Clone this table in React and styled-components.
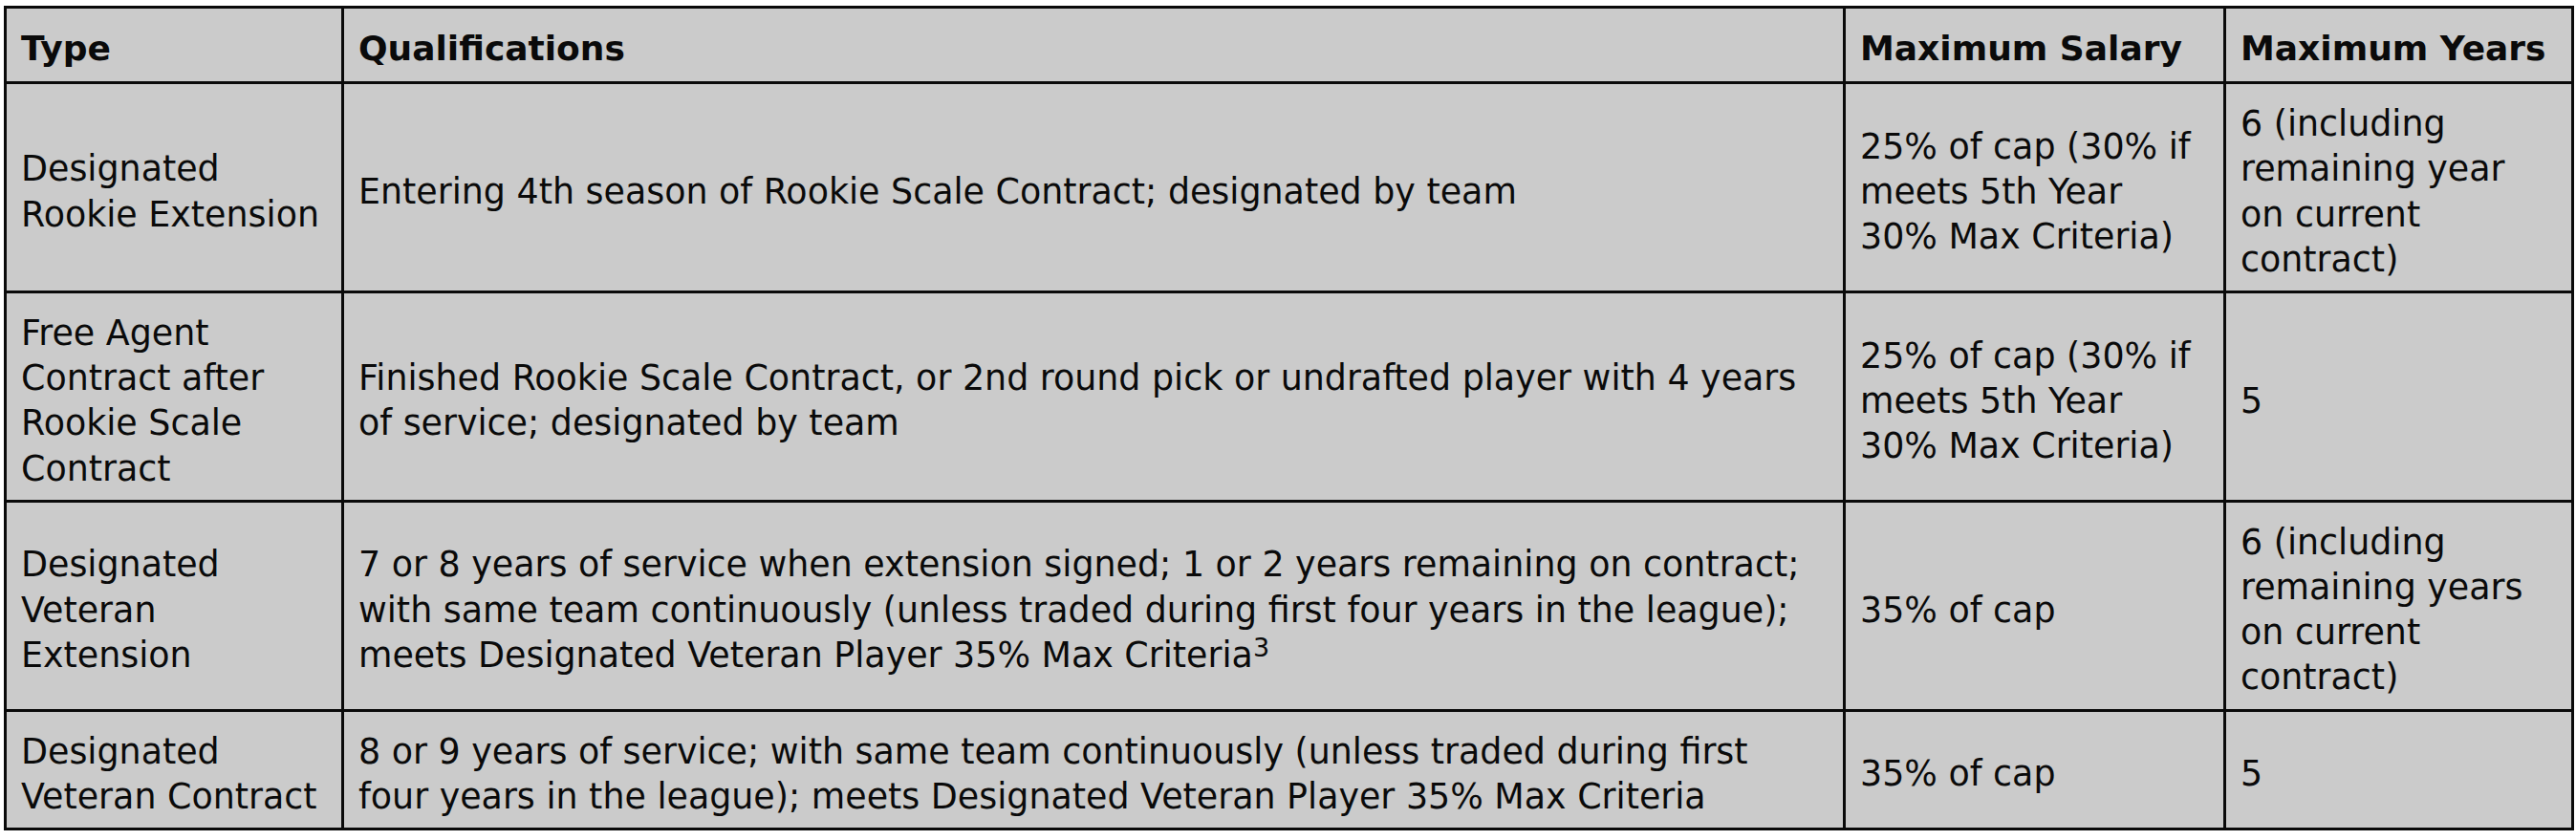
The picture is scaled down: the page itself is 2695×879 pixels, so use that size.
import React from "react";
import styled, { createGlobalStyle } from "styled-components";

const Global = createGlobalStyle`
  html, body { margin: 0; padding: 0; background: #ffffff; }
  body { font-family: "DejaVu Sans", Verdana, sans-serif; }
`;

const Page = styled.div`
  padding: 6px 0 0 4px;
`;

const Table = styled.table`
  width: 2686px;
  table-layout: fixed;
  border-collapse: collapse;
  border: 3px solid #0a0a0a;
  background: #cbcbcb;
  color: #0a0a0a;
  line-height: 47.2px;
`;

const Col = styled.col`
  width: ${(p) => p.$w}px;
`;

const Th = styled.th`
  border: 3px solid #0a0a0a;
  padding: 18px 15px 11px;
  text-align: left;
  vertical-align: middle;
  font-size: 36px;
  font-weight: bold;
`;

const Td = styled.td`
  border: 3px solid #0a0a0a;
  padding: 18px 15px 9px;
  text-align: left;
  vertical-align: middle;
  font-size: 36.4px;
  font-weight: normal;
`;

const Sup = styled.sup`
  font-size: 27px;
  line-height: 0;
  vertical-align: 11px;
`;

const cols = [353, 1571, 398, 364];

const rows = [
  {
    type: ["Designated", "Rookie Extension"],
    qual: ["Entering 4th season of Rookie Scale Contract; designated by team"],
    salary: ["25% of cap (30% if", "meets 5th Year", "30% Max Criteria)"],
    years: ["6 (including", "remaining year", "on current", "contract)"],
  },
  {
    type: ["Free Agent", "Contract after", "Rookie Scale", "Contract"],
    qual: [
      "Finished Rookie Scale Contract, or 2nd round pick or undrafted player with 4 years",
      "of service; designated by team",
    ],
    salary: ["25% of cap (30% if", "meets 5th Year", "30% Max Criteria)"],
    years: ["5"],
  },
  {
    type: ["Designated", "Veteran", "Extension"],
    qual: [
      "7 or 8 years of service when extension signed; 1 or 2 years remaining on contract;",
      "with same team continuously (unless traded during first four years in the league);",
      "meets Designated Veteran Player 35% Max Criteria",
    ],
    sup: "3",
    salary: ["35% of cap"],
    years: ["6 (including", "remaining years", "on current", "contract)"],
  },
  {
    type: ["Designated", "Veteran Contract"],
    qual: [
      "8 or 9 years of service; with same team continuously (unless traded during first",
      "four years in the league); meets Designated Veteran Player 35% Max Criteria",
    ],
    salary: ["35% of cap"],
    years: ["5"],
  },
];

function Lines({ lines, sup }) {
  return lines.map((l, i) => (
    <React.Fragment key={i}>
      {i > 0 && <br />}
      {l}
      {sup && i === lines.length - 1 && <Sup>{sup}</Sup>}
    </React.Fragment>
  ));
}

export default function App() {
  return (
    <Page>
      <Global />
      <Table>
        <colgroup>
          {cols.map((w, i) => (
            <Col key={i} $w={w} />
          ))}
        </colgroup>
        <thead>
          <tr>
            <Th>Type</Th>
            <Th>Qualifications</Th>
            <Th>Maximum Salary</Th>
            <Th>Maximum Years</Th>
          </tr>
        </thead>
        <tbody>
          {rows.map((r, i) => (
            <tr key={i}>
              <Td><Lines lines={r.type} /></Td>
              <Td><Lines lines={r.qual} sup={r.sup} /></Td>
              <Td><Lines lines={r.salary} /></Td>
              <Td><Lines lines={r.years} /></Td>
            </tr>
          ))}
        </tbody>
      </Table>
    </Page>
  );
}
